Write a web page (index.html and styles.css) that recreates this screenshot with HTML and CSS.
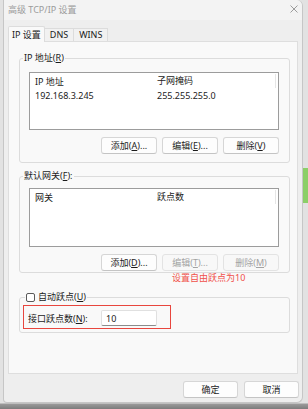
FILE: index.html
```html
<!DOCTYPE html>
<html lang="zh-CN">
<head>
    <meta charset="UTF-8">
    <title>高级 TCP/IP 设置</title>
    <link rel="stylesheet" href="styles.css">
</head>
<body>
    <div class="desk">
        <div class="window">
            <div class="titlebar">
                <span class="title">高级 TCP/IP 设置</span>
                <svg class="close" width="8" height="8" viewBox="0 0 8 8">
                    <path d="M0.5,0.5L7.5,7.5M7.5,0.5L0.5,7.5" stroke="#9c9c9c" stroke-width="1" fill="none"/>
                </svg>
            </div>

            <div class="tabs">
                <div class="tab active">IP 设置</div>
                <div class="tab">DNS</div>
                <div class="tab">WINS</div>
            </div>

            <div class="panel">
                <fieldset class="group group-ip">
                    <legend>IP 地址(<u>R</u>)</legend>
                    <div class="list">
                        <div class="list-head">
                            <span class="col1">IP 地址</span>
                            <span class="col2">子网掩码</span>
                        </div>
                        <div class="list-row">
                            <span class="col1">192.168.3.245</span>
                            <span class="col2">255.255.255.0</span>
                        </div>
                    </div>
                    <div class="btn-row">
                        <button class="btn">添加(<u>A</u>)...</button>
                        <button class="btn">编辑(<u>E</u>)...</button>
                        <button class="btn">删除(<u>V</u>)</button>
                    </div>
                </fieldset>

                <fieldset class="group group-gw">
                    <legend>默认网关(<u>F</u>):</legend>
                    <div class="list">
                        <div class="list-head">
                            <span class="col1">网关</span>
                            <span class="col2">跃点数</span>
                        </div>
                    </div>
                    <div class="btn-row">
                        <button class="btn">添加(<u>D</u>)...</button>
                        <button class="btn" disabled>编辑(<u>T</u>)...</button>
                        <button class="btn" disabled>删除(<u>M</u>)</button>
                    </div>
                </fieldset>

                <fieldset class="group group-metric">
                    <legend><span class="checkbox"></span>自动跃点(<u>U</u>)</legend>
                    <div class="metric-row">
                        <span class="metric-label">接口跃点数(<u>N</u>):</span>
                        <span class="input">10</span>
                    </div>
                </fieldset>
            </div>

            <div class="footer">
                <button class="btn">确定</button>
                <button class="btn">取消</button>
            </div>
        </div>

        <div class="green-tab"></div>
        <div class="mark-box"></div>
        <div class="mark-text">设置自由跃点为10</div>
    </div>
</body>
</html>
```

FILE: styles.css
```css
* {
    margin: 0;
    padding: 0;
    box-sizing: border-box;
}

body {
    font-family: 'Noto Sans', 'Noto Sans CJK SC', sans-serif;
    font-size: 9px;
    color: #1b1b1b;
    background: linear-gradient(180deg, #e2e2e2 0, #e2e2e2 403px, #9a9a9a 404px, #7c7c7c 100%);
    width: 308px;
    height: 409px;
    overflow: hidden;
}

.desk {
    position: relative;
    width: 308px;
    height: 409px;
}

.window {
    margin-left: 3px;
    width: 300px;
    height: 403px;
    background: #eeeeee;
    border: 1px solid #c6c6c6;
    border-top: none;
    border-radius: 0 6px 6px 4px;
    display: flex;
    flex-direction: column;
}

.titlebar {
    height: 20px;
    background: #f3f3f3;
    display: flex;
    align-items: center;
    justify-content: space-between;
    padding: 0 4px 2px 4px;
    border-radius: 0 6px 0 0;
}

.title {
    color: #9b9b9b;
}

.tabs {
    display: flex;
    align-items: flex-end;
    height: 15px;
    margin: 6px 0 0 4px;
    position: relative;
    z-index: 1;
}

.tab {
    height: 13px;
    padding: 0 5px;
    line-height: 12px;
    white-space: nowrap;
    background: #f1f1f1;
    border: 1px solid #dcdcdc;
    border-bottom: none;
    border-left: none;
}

.tab.active {
    height: 16px;
    margin-bottom: -1px;
    padding: 0 3px;
    line-height: 15px;
    background: #f9f9f9;
    border-left: 1px solid #dcdcdc;
    border-radius: 2px 2px 0 0;
}

.panel {
    margin: 0 4px;
    height: 333px;
    background: #f9f9f9;
    border: 1px solid #dedede;
    padding: 0 0 0 10px;
}

.group {
    width: 271px;
    border: 1px solid #dcdcdc;
    border-radius: 3px;
    padding: 8px 10px 8px 9px;
    min-inline-size: 0;
}

.group legend {
    margin-left: -6px;
    padding: 0 1px;
    height: 12px;
    line-height: 12px;
}

.group-ip {
    margin-top: 10px;
}

.group-gw {
    margin-top: 7px;
    padding: 6px 10px 1px 9px;
}

.group-metric {
    margin-top: 18px;
    padding: 7px 10px 6px 8px;
}

.group-metric legend {
    margin-left: -3px;
    display: flex;
    align-items: center;
}

.list {
    height: 58px;
    background: #ffffff;
    border: 1px solid #9c9c9c;
    padding-left: 5px;
}

.group-gw .list {
    height: 59px;
}

.list-head,
.list-row {
    display: flex;
    height: 14px;
    align-items: center;
}

.list-head {
    margin-top: 1px;
}

.col1 {
    width: 122px;
}

.col2 {
    flex: 1;
    margin-right: 2px;
}

.list-head .col2 {
    border-right: 1px solid #e6e6e6;
    height: 14px;
    line-height: 14px;
}

.btn-row {
    display: flex;
    justify-content: flex-end;
    gap: 5px;
    margin-top: 7px;
}

.btn {
    width: 56px;
    height: 17px;
    font-family: inherit;
    font-size: 9px;
    color: #1b1b1b;
    background: #fdfdfd;
    border: 1px solid #d6d6d6;
    border-bottom-color: #c4c4c4;
    border-radius: 3px;
}

.btn:disabled {
    color: #a3a3a3;
    background: #f8f8f8;
    border-color: #e3e3e3;
}

.checkbox {
    width: 9px;
    height: 9px;
    border: 1px solid #5a5a5a;
    border-radius: 2px;
    background: #ffffff;
    margin-right: 3px;
}

.metric-row {
    display: flex;
    align-items: center;
}

.metric-label {
    width: 73px;
}

.input {
    width: 56px;
    height: 16px;
    line-height: 15px;
    padding-left: 4px;
    background: #ffffff;
    border: 1px solid #e0e0e0;
    border-bottom-color: #8c8c8c;
    border-radius: 2px;
}

.footer {
    display: flex;
    justify-content: flex-end;
    gap: 6px;
    padding: 7px 3px 0 0;
}

.footer .btn {
    width: 55px;
}

/* desktop bits behind the dialog */
.green-tab {
    position: absolute;
    left: 303px;
    top: 168px;
    width: 5px;
    height: 35px;
    background: #8ccf68;
}

/* annotation drawn over the screenshot */
.mark-box {
    position: absolute;
    left: 23px;
    top: 305px;
    width: 148px;
    height: 24px;
    border: 1px solid #e8463e;
}

.mark-text {
    position: absolute;
    left: 172px;
    top: 271px;
    color: #f0514a;
    font-size: 9px;
    line-height: 14px;
}
```
